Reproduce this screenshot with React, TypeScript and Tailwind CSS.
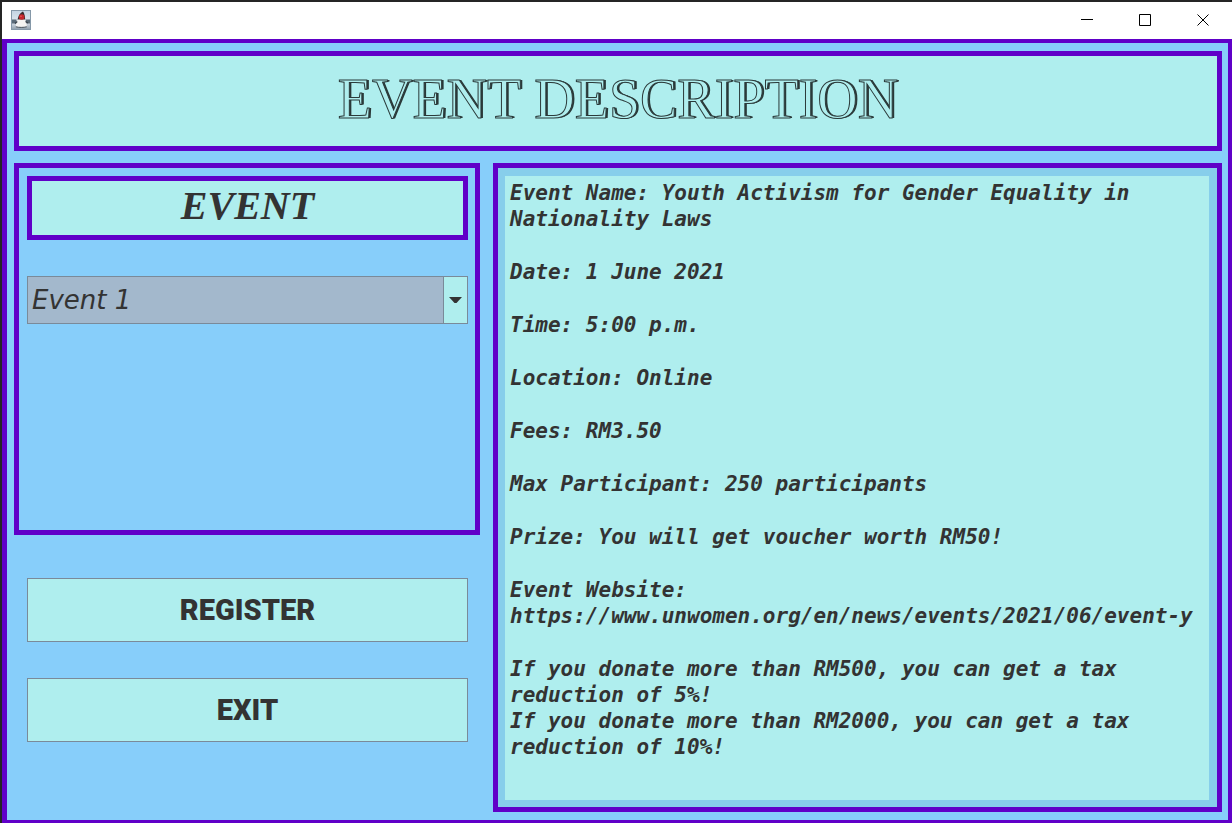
import type { ReactNode } from "react";

const details: string[] = [
  "Event Name: Youth Activism for Gender Equality in Nationality Laws",
  "Date: 1 June 2021",
  "Time: 5:00 p.m.",
  "Location: Online",
  "Fees: RM3.50",
  "Max Participant: 250 participants",
  "Prize: You will get voucher worth RM50!",
];

const website = "https://www.unwomen.org/en/news/events/2021/06/event-y";

function JavaIcon() {
  return (
    <svg width="20" height="20" viewBox="0 0 20 20" aria-hidden="true">
      <defs>
        <linearGradient id="tile" x1="0" y1="0" x2="0" y2="1">
          <stop offset="0" stopColor="#c3d3e2" />
          <stop offset="0.6" stopColor="#dfe7ee" />
          <stop offset="1" stopColor="#8e9eab" />
        </linearGradient>
      </defs>
      <rect x="0.5" y="0.5" width="19" height="19" fill="url(#tile)" stroke="#8598a8" />
      <path d="M1 9.500h4.500v4H1zM14.500 9.500H19v4h-4.500z" fill="#5b6b78" />
      <path d="M12 1.500C9.500 2.500 7 5.500 6.500 10.500l7.500 .5C14.500 7.500 13.500 3.500 12 1.500Z" fill="#3a2a2c" />
      <path d="M6.500 9.500C5.500 12 4.800 14.500 4.800 16.500c2.200 .8 8.400 .8 11 0C15.800 14 15 11.500 14 9.500Z" fill="#f4f4f2" />
      <path d="M4.800 16.800c3 .8 8 .8 11 0" fill="none" stroke="#4d565e" />
      <path d="M6.300 11.500 4 13.500M14.500 11.500l2.500 1.500" stroke="#39424a" strokeWidth="1.300" />
      <circle cx="10.700" cy="7" r="2.800" fill="#c4262c" />
      <circle cx="10" cy="6.200" r="0.800" fill="#e8605f" />
    </svg>
  );
}

function WindowButton({ label, children }: { label: string; children: ReactNode }) {
  return (
    <button type="button" aria-label={label} className="flex h-full w-[58px] items-center justify-center">
      <svg width="12" height="12" viewBox="0 0 12 12" fill="none" stroke="#000" aria-hidden="true">
        {children}
      </svg>
    </button>
  );
}

function ActionButton({ children }: { children: ReactNode }) {
  return (
    <button
      type="button"
      className="h-16 w-full border border-[#7a8a99] bg-[#afeeee] font-[Roboto,sans-serif] text-[29px] leading-8 font-black text-[#333333]"
    >
      {children}
    </button>
  );
}

export default function App() {
  return (
    <div className="flex min-h-screen flex-col bg-[#252525] pt-[2px] pl-[2px] text-[#333333]">
      <header className="flex h-[37px] items-center justify-between bg-white pb-[2px] pl-[9px]">
        <JavaIcon />
        <div className="flex h-full">
          <WindowButton label="Minimize">
            <path d="M0 5.500H12" />
          </WindowButton>
          <WindowButton label="Maximize">
            <path d="M.5 .5H11.500V11.500H.5Z" />
          </WindowButton>
          <WindowButton label="Close">
            <path d="M.5 .5 11.500 11.500M11.500 .5 .5 11.500" />
          </WindowButton>
        </div>
      </header>

      <main className="flex flex-1 flex-col gap-3 border-4 border-b-[3px] border-l-[5px] border-[#6000c8] bg-[#87cefa] py-2 pr-[6px] pl-[7px]">
        <div className="flex h-[100px] items-center justify-center border-[5px] border-[#6000c8] bg-[#afeeee] pb-1">
          <h1 className="font-['Liberation_Serif',serif] text-[56px] leading-[60px] text-[#afeeee] [-webkit-text-stroke:1px_#2b3a3a] [text-shadow:1px_0_0_#2b3a3a,2px_0_0_#2b3a3a]">
            EVENT DESCRIPTION
          </h1>
        </div>

        <div className="grid flex-1 grid-cols-[minmax(0,466fr)_minmax(0,729fr)] gap-[13px]">
          <div className="flex flex-col">
            <section className="flex min-h-[372px] flex-col gap-9 border-[5px] border-[#6000c8] py-2 pr-[7px] pl-2">
              <div className="flex h-16 items-center justify-center border-[5px] border-[#6000c8] bg-[#afeeee] pb-1">
                <h2 className="font-['Liberation_Serif',serif] text-[40px] leading-[48px] font-bold italic">
                  EVENT
                </h2>
              </div>
              <div className="relative h-12">
                <select
                  aria-label="Event"
                  className="h-full w-full appearance-none border border-[#7a8a99] bg-[#a3b8cc] pl-1 font-['DejaVu_Sans',sans-serif] text-[26px] text-[#333333] italic"
                >
                  <option>Event 1</option>
                </select>
                <span className="pointer-events-none absolute inset-y-0 right-0 flex w-[25px] items-center justify-center border border-[#7a8a99] bg-[#afeeee]">
                  <svg width="13" height="6" viewBox="0 0 13 6" aria-hidden="true">
                    <path d="M0 0H13L7.500 6H5.500Z" fill="#333333" />
                  </svg>
                </span>
              </div>
            </section>

            <div className="flex flex-col gap-9 pt-[43px] pr-3 pl-[13px]">
              <ActionButton>REGISTER</ActionButton>
              <ActionButton>EXIT</ActionButton>
            </div>
          </div>

          <section className="flex flex-col border-[5px] border-[#6000c8] bg-[#87ceeb] pt-2 pr-2 pb-[7px] pl-[7px]">
            <div className="flex flex-1 flex-col gap-[27px] overflow-hidden bg-[#afeeee] px-[5px] pt-1 font-['DejaVu_Sans_Mono',monospace] text-[21px] leading-[26px] font-bold italic">
              {details.map((line) => (
                <p key={line}>{line}</p>
              ))}
              <p className="whitespace-nowrap">
                Event Website:
                <br />
                <a href={website}>{website}</a>
              </p>
              <div>
                <p>If you donate more than RM500, you can get a tax reduction of 5%!</p>
                <p>If you donate more than RM2000, you can get a tax reduction of 10%!</p>
              </div>
            </div>
          </section>
        </div>
      </main>
    </div>
  );
}
